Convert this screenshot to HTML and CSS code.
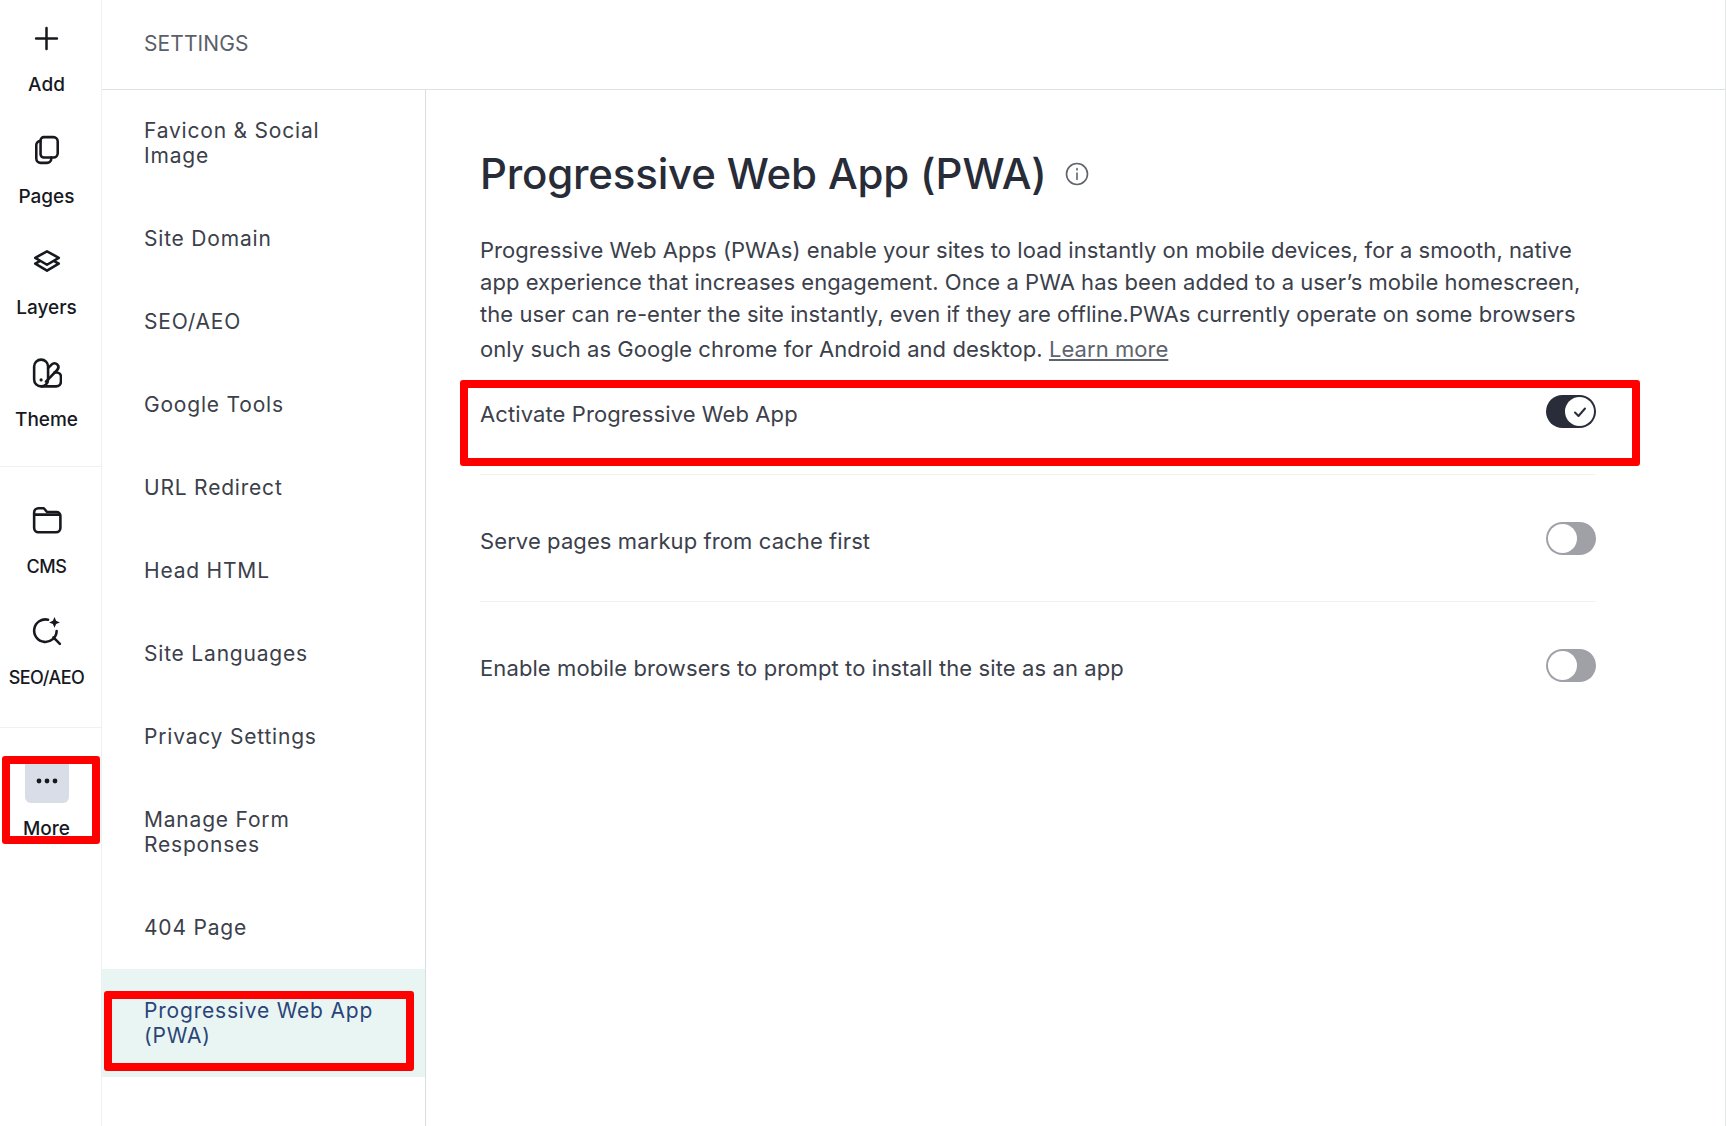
FILE: index.html
```html
<!DOCTYPE html>
<html lang="en">
<head>
<meta charset="utf-8">
<title>Progressive Web App (PWA)</title>
<link rel="stylesheet" href="styles.css">
</head>
<body>
<div class="app">
  <nav class="rail">
    <div class="rail-group">
      <a class="rail-item"><span class="rail-icon"><svg viewBox="0 0 24 24" class="ico plus"><path d="M12 2v20M2 12h20"/></svg></span><span class="rail-label">Add</span></a>
      <a class="rail-item"><span class="rail-icon"><svg viewBox="0 0 28 28" class="ico"><path d="M11 2h9a4 4 0 0 1 4 4v11a4 4 0 0 1-4 4h-9a3 3 0 0 1-3-3V5a3 3 0 0 1 3-3z"/><path d="M8 5.500a4 4 0 0 0-4 4V22a4 4 0 0 0 4 4h6a4 4 0 0 0 4-4v-1"/></svg></span><span class="rail-label">Pages</span></a>
      <a class="rail-item"><span class="rail-icon"><svg viewBox="0 0 28 28" class="ico"><path d="M14 5 25 11 14 17.500 3 11z"/><path d="M6.500 14.500 3 16.500 14 23 25 16.500 21.500 14.500"/></svg></span><span class="rail-label">Layers</span></a>
      <a class="rail-item"><span class="rail-icon"><svg viewBox="0 0 28 28" class="ico"><rect x="2" y="1.500" width="13" height="25" rx="6.500"/><path d="M15 9.500 18.500 6a3.500 3.500 0 0 1 5 0c1.500 1.500 1.500 3.600 0 5.200L13 22"/><path d="M21 13.500h2a4 4 0 0 1 4 4V22a4.500 4.500 0 0 1-4.500 4.500H9"/><circle class="dot" cx="8.500" cy="20.500" r="1.500"/></svg></span><span class="rail-label">Theme</span></a>
    </div>
    <div class="rail-group">
      <a class="rail-item"><span class="rail-icon"><svg viewBox="0 0 28 28" class="ico"><path d="M2 7a4 4 0 0 1 4-4h5l3 3.500h9a3.500 3.500 0 0 1 3.500 3.500v11.500a4 4 0 0 1-4 4H6a4 4 0 0 1-4-4z"/><path d="M2 9h24"/></svg></span><span class="rail-label tight">CMS</span></a>
      <a class="rail-item"><span class="rail-icon"><svg viewBox="0 0 28 28" class="ico"><path d="M15 3.500A10.500 10.500 0 1 0 23 14"/><path d="M20 20l6 6"/><path class="dot" d="M21 1l1.500 3.500L26 6l-3.500 1.500L21 11l-1.500-3.500L16 6l3.500-1.500z"/></svg></span><span class="rail-label tight">SEO/AEO</span></a>
    </div>
    <div class="rail-group last">
      <a class="rail-item more"><span class="rail-icon"><svg viewBox="0 0 24 8" class="dots"><circle cx="4" cy="4" r="2.400"/><circle cx="12" cy="4" r="2.400"/><circle cx="20" cy="4" r="2.400"/></svg></span><span class="rail-label">More</span></a>
      <span class="mark mark-more"></span>
    </div>
  </nav>
  <div class="panel">
    <header class="topbar">SETTINGS</header>
    <div class="body">
      <aside class="menu">
        <a class="menu-item">Favicon &amp; Social Image</a>
        <a class="menu-item">Site Domain</a>
        <a class="menu-item">SEO/AEO</a>
        <a class="menu-item">Google Tools</a>
        <a class="menu-item">URL Redirect</a>
        <a class="menu-item">Head HTML</a>
        <a class="menu-item">Site Languages</a>
        <a class="menu-item">Privacy Settings</a>
        <a class="menu-item">Manage Form Responses</a>
        <a class="menu-item">404 Page</a>
        <a class="menu-item active">Progressive Web App (PWA)<span class="mark mark-pwa"></span></a>
      </aside>
      <main class="content">
        <h1 class="title">Progressive Web App (PWA)<svg viewBox="0 0 24 24" class="info"><circle cx="12" cy="12" r="10.500"/><path d="M12 11v6.500M12 6.500v1.500"/></svg></h1>
        <p class="intro">Progressive Web Apps (PWAs) enable your sites to load instantly on mobile devices, for a smooth, native<br>app experience that increases engagement. Once a PWA has been added to a user’s mobile homescreen,<br>the user can re-enter the site instantly, even if they are offline.PWAs currently operate on some browsers<br>only such as Google chrome for Android and desktop. <a class="learn">Learn more</a></p>
        <div class="row">
          <span>Activate Progressive Web App</span>
          <span class="toggle on"><span class="knob"><svg viewBox="0 0 16 16" class="check"><path d="M3 8.500 6.500 12 13 4.500"/></svg></span></span>
          <span class="mark mark-row"></span>
        </div>
        <div class="row">
          <span>Serve pages markup from cache first</span>
          <span class="toggle"><span class="knob"></span></span>
        </div>
        <div class="row">
          <span>Enable mobile browsers to prompt to install the site as an app</span>
          <span class="toggle"><span class="knob"></span></span>
        </div>
      </main>
    </div>
  </div>
</div>
</body>
</html>
```
FILE: styles.css
```css
* { box-sizing: border-box; }
html, body { margin: 0; height: 100%; background: #fff; }
body { font-family: "Inter", "Liberation Sans", sans-serif; color: #2a2f3a; overflow: hidden; }
.app { display: flex; height: 1126px; width: 1726px; border-right: 1px solid #e4e6e8; }

.rail { width: 102px; flex: none; padding-right: 8px; border-right: 1px solid #eef0f1; display: flex; flex-direction: column; position: relative; }
.rail-group { position: relative; margin-right: -8px; padding: 18px 8px 34px 0; border-bottom: 1px solid #eef0f1; display: flex; flex-direction: column; gap: 32.500px; }
.rail-group + .rail-group { padding-top: 33px; padding-bottom: 37px; }
.rail-group.last { border-bottom: 0; padding-top: 31px; }
.rail-item { display: flex; flex-direction: column; align-items: center; gap: 15px; color: #17191f; }
.rail-icon { height: 40px; width: 44px; display: flex; align-items: center; justify-content: center; border-radius: 6px; }
.rail-label { font-size: 19px; line-height: 24px; font-weight: 500; }
.rail-label.tight { font-size: 18px; letter-spacing: -0.5px; }
.ico { width: 30px; height: 30px; fill: none; stroke: #17191f; stroke-width: 2.400; stroke-linecap: round; stroke-linejoin: round; }
.ico.plus { width: 25px; height: 25px; }
.ico .dot { fill: #17191f; stroke: none; }
.more { gap: 14px; }
.more .rail-icon { background: #d9dde8; height: 44px; }
.dots { width: 24px; height: 8px; fill: #17191f; }

.panel { flex: 1; display: flex; flex-direction: column; min-width: 0; }
.topbar { height: 90px; flex: none; border-bottom: 1px solid #dfe2e5; padding: 0 0 2px 42px; display: flex; align-items: center; font-size: 21px; color: #5a5f6a; letter-spacing: 0.1px; }
.body { flex: 1; display: flex; min-height: 0; }

.menu { width: 324px; flex: none; border-right: 1px solid #d9dee0; display: flex; flex-direction: column; margin-top: -1px; }
.menu-item { position: relative; padding: 29px 40px 29px 42px; font-size: 21px; line-height: 25px; letter-spacing: 0.8px; color: #3b404b; }
.menu-item.active { background: #e9f5f2; color: #2a4479; }

.content { flex: 1; padding: 52px 0 0 54px; min-width: 0; }
.title { margin: 0 0 28px; width: 1116px; font-size: 42px; line-height: 64px; font-weight: 500; letter-spacing: -0.18px; color: #272c38; display: flex; align-items: center; gap: 18px; }
.info { width: 24px; height: 24px; fill: none; stroke: #5e636d; stroke-width: 1.600; stroke-linecap: round; }
.intro { margin: 0; width: 1116px; font-size: 22px; line-height: 32px; letter-spacing: 0.05px; color: #3b404b; white-space: nowrap; }
.learn { display: inline-block; line-height: 38px; text-decoration: underline; color: #5e636d; }
.row { position: relative; width: 1116px; height: 127px; border-bottom: 1px solid #f0f1f2; display: flex; justify-content: space-between; font-size: 22px; line-height: 32px; letter-spacing: 0.1px; color: #3b404b; padding-top: 50px; }
.row:first-of-type { height: 107px; padding-top: 30px; }
.row:last-child { border-bottom: 0; }
.toggle { width: 50px; height: 33px; flex: none; border-radius: 17px; background: #9fa1a7; padding: 2px; margin-top: -3px; display: flex; }
.toggle.on { background: #282d39; justify-content: flex-end; }
.knob { width: 29px; height: 29px; border-radius: 50%; background: #fff; display: flex; align-items: center; justify-content: center; }
.check { width: 16px; height: 16px; fill: none; stroke: #282d39; stroke-width: 2; stroke-linecap: round; stroke-linejoin: round; }

.mark { position: absolute; border: 8px solid #ff0000; border-radius: 3px; pointer-events: none; }
.mark-more { left: 2px; top: 28px; width: 98px; height: 88px; }
.mark-pwa { left: 2px; top: 22px; width: 310px; height: 80px; }
.mark-row { left: -20px; top: 12px; width: 1180px; height: 86px; }
```
